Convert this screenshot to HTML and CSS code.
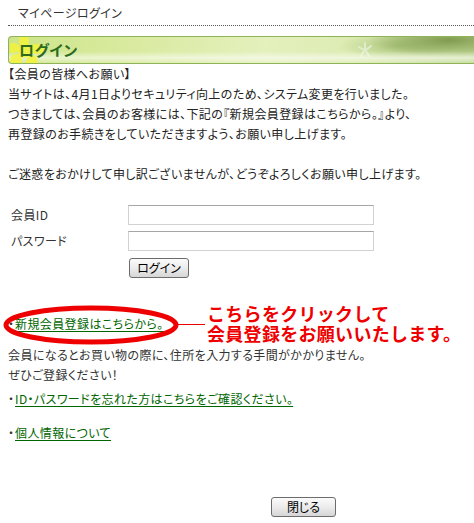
FILE: index.html
```html
<!DOCTYPE html>
<html lang="ja">
<head>
<meta charset="utf-8">
<title>マイページログイン</title>
<link rel="stylesheet" href="styles.css">
</head>
<body>
<div class="page">
  <h1 class="page-title">マイページログイン</h1>
  <h2 class="section-bar">
    <svg class="bar-flower" width="34" height="28" viewBox="0 0 34 28" aria-hidden="true">
      <g fill="#f4f23a" opacity="0.85">
        <ellipse cx="14" cy="4" rx="5" ry="8"/>
        <ellipse cx="26" cy="12" rx="8" ry="5"/>
        <ellipse cx="22" cy="25" rx="6" ry="7"/>
        <ellipse cx="6" cy="24" rx="6" ry="7"/>
        <ellipse cx="3" cy="11" rx="7" ry="5"/>
        <circle cx="14" cy="15" r="6"/>
      </g>
    </svg>
    <span class="bar-label">ログイン</span>
    <svg class="bar-star" width="20" height="18" viewBox="0 0 20 18" aria-hidden="true">
      <g stroke="#f4f8ec" stroke-width="2" stroke-linecap="round" opacity="0.6">
        <line x1="10" y1="2" x2="10" y2="8"/>
        <line x1="4" y1="6" x2="9" y2="9"/>
        <line x1="16" y1="5" x2="11" y2="9"/>
        <line x1="6" y1="15" x2="9" y2="10"/>
        <line x1="14" y1="15" x2="11" y2="10"/>
      </g>
    </svg>
  </h2>

  <div class="notice">
    <p>【会員の皆様へお願い】<br>当サイトは、4月1日よりセキュリティ向上のため、システム変更を行いました。<br>つきましては、会員のお客様には、下記の『新規会員登録はこちらから。』より、<br>再登録のお手続きをしていただきますよう、お願い申し上げます。</p>
    <p class="notice-end">ご迷惑をおかけして申し訳ございませんが、どうぞよろしくお願い申し上げます。</p>
  </div>

  <form class="login-form">
    <label class="form-label" for="member-id">会員ID</label>
    <input class="form-input" id="member-id" type="text">
    <label class="form-label" for="member-pw">パスワード</label>
    <input class="form-input" id="member-pw" type="password">
    <span></span>
    <button class="btn btn-login" type="button">ログイン</button>
  </form>

  <div class="register">
    <div class="link-row">
      <span class="bullet">・</span><a class="link" href="#">新規会員登録はこちらから。</a>
      <svg class="callout-ring" width="178" height="42" viewBox="0 0 178 42" aria-hidden="true">
        <ellipse cx="88" cy="20" rx="85" ry="17" fill="none" stroke="#ee0000" stroke-width="5"/>
      </svg>
      <span class="callout-line"></span>
      <p class="callout-text">こちらをクリックして<br>会員登録をお願いいたします。</p>
    </div>
    <p class="register-note">会員になるとお買い物の際に、住所を入力する手間がかかりません。<br>ぜひご登録ください！</p>
  </div>

  <p class="link-item item-forgot"><span class="bullet">・</span><a class="link" href="#">ID・パスワードを忘れた方はこちらをご確認ください。</a></p>
  <p class="link-item item-privacy"><span class="bullet">・</span><a class="link" href="#">個人情報について</a></p>

  <div class="close-wrap">
    <button class="btn btn-close" type="button">閉じる</button>
  </div>
</div>
</body>
</html>
```
FILE: styles.css
```css
html, body {
  margin: 0;
  padding: 0;
  background: #ffffff;
}

body {
  font-family: "Noto Sans CJK JP", "Noto Sans", sans-serif;
  font-size: 12px;
  line-height: 20px;
  color: #222222;
  font-feature-settings: "palt";
  letter-spacing: 0.4px;
}

.page {
  padding-left: 8px;
}

.page-title {
  margin: 0;
  padding: 3px 0 2px 10px;
  font-size: 12px;
  font-weight: normal;
  line-height: 20px;
  color: #333333;
  border-bottom: 1px dotted #555555;
}

.section-bar {
  position: relative;
  margin: 10px 0 0 0;
  height: 26px;
  display: flex;
  align-items: center;
  padding-left: 10px;
  border: 1px solid #8fb458;
  border-right: none;
  border-radius: 4px 0 0 4px;
  overflow: hidden;
  font-size: 15px;
  font-weight: bold;
  letter-spacing: 0.5px;
  color: #2c6a1e;
  background:
    linear-gradient(to bottom, rgba(255,255,255,0) 55%, rgba(255,255,255,0.55) 80%, rgba(255,255,255,0.1) 100%),
    radial-gradient(ellipse 80px 18px at 440px 3px, rgba(110,140,60,0.8), rgba(110,140,60,0) 100%),
    radial-gradient(ellipse 60px 14px at 390px 9px, rgba(150,180,100,0.6), rgba(150,180,100,0) 100%),
    linear-gradient(to right, #cde58a 0%, #d8ea9e 25%, #e4f0bd 55%, #dcebb2 75%, #c4da98 100%);
}

.bar-flower {
  position: absolute;
  left: 1px;
  top: 0;
}

.bar-label {
  position: relative;
}

.bar-star {
  position: absolute;
  left: 346px;
  top: 4px;
}

.notice p {
  margin: 0;
}

.notice-end {
  margin-top: 20px !important;
}

.login-form {
  margin: 21px 0 0 0;
  display: grid;
  grid-template-columns: 120px 246px;
  row-gap: 6px;
  align-items: center;
}

.form-label {
  padding-left: 3px;
  color: #333333;
}

.form-input {
  box-sizing: border-box;
  width: 246px;
  height: 20px;
  margin: 0;
  padding: 0 3px;
  border: 1px solid #d2d2d2;
  border-top-color: #a6a6a6;
  background: #ffffff;
  font: inherit;
}

.btn {
  box-sizing: border-box;
  height: 20px;
  margin: 0;
  padding: 0;
  border: 1px solid #6c6c6c;
  border-radius: 3px;
  background: linear-gradient(to bottom, #fbfbfb 0%, #ececec 50%, #d6d6d6 100%);
  font-family: "Noto Sans CJK JP", sans-serif;
  font-size: 12px;
  line-height: 18px;
  color: #000000;
  font-feature-settings: "palt";
}

.btn-login {
  width: 60px;
  margin-top: 1px;
  margin-left: 1px;
}

.register {
  margin-top: 36px;
}

.link-row {
  position: relative;
  display: flex;
  align-items: center;
  height: 20px;
}

.bullet {
  display: inline-block;
  width: 7px;
  color: #333333;
}

.link {
  color: #006600;
  text-decoration: underline;
  text-underline-offset: 2px;
}

.callout-ring {
  position: absolute;
  left: -5px;
  top: -9px;
}

.callout-line {
  position: absolute;
  left: 168px;
  top: 10px;
  width: 29px;
  height: 0;
  border-top: 1.5px solid #ee0000;
}

.callout-text {
  position: absolute;
  left: 199px;
  top: -11px;
  margin: 0;
  font-size: 18px;
  line-height: 20px;
  font-weight: bold;
  color: #ee0000;
  white-space: nowrap;
  font-feature-settings: normal;
  letter-spacing: 0.3px;
}

.register-note {
  margin: 11px 0 0 0;
  color: #333333;
}

.link-item {
  margin: 0;
  display: flex;
}

.item-forgot {
  margin-top: 4px;
}

.item-privacy {
  margin-top: 14px;
}

.close-wrap {
  margin-top: 54px;
  padding-left: 263px;
}

.btn-close {
  width: 65px;
}
```
